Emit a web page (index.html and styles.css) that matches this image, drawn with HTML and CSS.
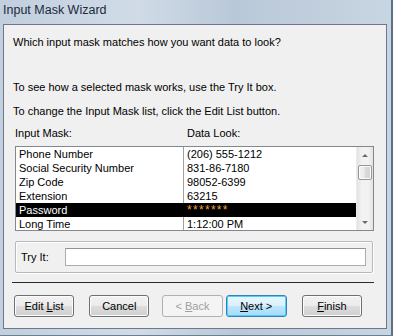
FILE: index.html
```html
<!DOCTYPE html>
<html lang="en">
<head>
  <meta charset="UTF-8" />
  <title>Input Mask Wizard</title>
  <link rel="stylesheet" href="styles.css">
</head>
<body>
<div class="window">
  <div class="titlebar">Input Mask Wizard</div>
  <div class="client">
    <p class="prompt">Which input mask matches how you want data to look?</p>
    <p class="hint first">To see how a selected mask works, use the Try It box.</p>
    <p class="hint">To change the Input Mask list, click the Edit List button.</p>
    <div class="headers">
      <span class="col-mask">Input Mask:</span>
      <span class="col-look">Data Look:</span>
    </div>
    <div class="listbox">
      <div class="rows">
        <div class="row"><span class="col-mask">Phone Number</span><span class="col-look">(206) 555-1212</span></div>
        <div class="row"><span class="col-mask">Social Security Number</span><span class="col-look">831-86-7180</span></div>
        <div class="row"><span class="col-mask">Zip Code</span><span class="col-look">98052-6399</span></div>
        <div class="row"><span class="col-mask">Extension</span><span class="col-look">63215</span></div>
        <div class="row selected"><span class="col-mask">Password</span><span class="col-look stars">*******</span></div>
        <div class="row"><span class="col-mask">Long Time</span><span class="col-look">1:12:00 PM</span></div>
      </div>
      <div class="scrollbar">
        <div class="arrow up"></div>
        <div class="track"><div class="thumb"></div></div>
        <div class="arrow down"></div>
      </div>
    </div>
    <div class="tryit">
      <label for="try">Try It:</label>
      <input type="text" id="try" />
    </div>
    <div class="separator"></div>
    <div class="buttons">
      <button>Edit <u>L</u>ist</button>
      <button class="gap-sm">Cancel</button>
      <button class="disabled">&lt; <u>B</u>ack</button>
      <button class="focused"><u>N</u>ext &gt;</button>
      <button class="gap-sm"><u>F</u>inish</button>
    </div>
  </div>
</div>
</body>
</html>
```

FILE: styles.css
```css
:root {
  --face: #f0f0f0;
  --text: #000000;
}
body {
  margin: 0;
  width: 393px;
  height: 336px;
  overflow: hidden;
  font-family: 'Liberation Sans', Arial, sans-serif;
  font-size: 11px;
  color: var(--text);
  background: #dbe5ef;
}
.window {
  width: 393px;
  height: 336px;
  box-sizing: border-box;
  background: linear-gradient(90deg, #c1cfde 0%, #d0dbe7 35%, #b9c8d8 60%, #c8d5e2 100%);
  border-right: 2px solid #5f6f82;
  border-bottom: 1px solid #6f7f90;
  padding: 0 4px 5px 3px;
}
.titlebar {
  height: 24px;
  line-height: 20px;
  font-size: 12.5px;
  color: #1c2a3c;
}
.client {
  height: 305px;
  box-sizing: border-box;
  background: var(--face);
  border: 1px solid #6c7888;
  padding: 0 11px 0 8px;
}
p {
  margin: 0;
  height: 14px;
  line-height: 14px;
  white-space: nowrap;
}
.prompt {
  margin-top: 10px;
  padding-left: 1px;
}
.hint {
  margin-top: 10px;
  padding-left: 1px;
}
.hint.first {
  margin-top: 31px;
}
.headers {
  display: flex;
  margin-top: 8px;
  height: 14px;
  line-height: 14px;
  padding-left: 3px;
}
.col-mask {
  width: 169px;
  flex: none;
  box-sizing: border-box;
}
.col-look {
  flex: 1;
  padding-left: 3px;
}
.listbox {
  display: flex;
  margin-top: 6px;
  margin-left: 3px;
  width: 359px;
  height: 85px;
  box-sizing: border-box;
  border: 1px solid #828790;
  background: #ffffff;
}
.rows {
  flex: 1;
  background: linear-gradient(90deg, transparent 167px, #a0a0a0 167px, #a0a0a0 168px, transparent 168px);
}
.row {
  display: flex;
  height: 14px;
  line-height: 14px;
  white-space: nowrap;
}
.row .col-mask {
  padding-left: 3px;
  width: 168px;
}
.row .col-look {
  padding-left: 3px;
}
.row.selected {
  background: #000000;
  color: #ffffff;
}
.stars {
  color: #e8a33c;
  font-size: 12px;
  letter-spacing: 1.3px;
}
.scrollbar {
  width: 16px;
  flex: none;
  display: flex;
  flex-direction: column;
  background: linear-gradient(90deg, #e3e3e3, #f2f2f2 30%, #f2f2f2 70%, #e3e3e3);
  border-left: 1px solid #ececec;
}
.arrow {
  height: 17px;
  flex: none;
  position: relative;
}
.arrow::after {
  content: "";
  position: absolute;
  left: 5px;
  width: 0;
  height: 0;
  border-left: 3px solid transparent;
  border-right: 3px solid transparent;
}
.arrow.up::after {
  top: 7px;
  border-bottom: 3px solid #6a6a6a;
}
.arrow.down::after {
  bottom: 6px;
  border-top: 3px solid #6a6a6a;
}
.track {
  flex: 1;
  padding: 1px 1px 0 1px;
}
.thumb {
  height: 15px;
  box-sizing: border-box;
  border: 1px solid #979797;
  border-radius: 2px;
  background: linear-gradient(90deg, #f3f3f3, #e8e8e8 50%, #d9d9d9 51%, #d6d6d6);
  box-shadow: inset 0 0 0 1px #fbfbfb;
}
.tryit {
  display: flex;
  align-items: center;
  margin-top: 10px;
  margin-left: 3px;
  width: 358px;
  height: 32px;
  box-sizing: border-box;
  border: 1px solid #b5b9bd;
  border-radius: 2px;
  box-shadow: inset 1px 1px 0 #ffffff, 1px 1px 0 #ffffff;
  padding: 0 6px 0 5px;
}
.tryit label {
  width: 44px;
  flex: none;
}
.tryit input {
  flex: 1;
  height: 18px;
  box-sizing: border-box;
  border: 1px solid #abadb3;
  border-top-color: #8e9299;
  background: #ffffff;
  margin: 0;
  padding: 0 2px;
  font: inherit;
}
.separator {
  margin-top: 9px;
  height: 0;
  border-top: 1px solid #2b2b2b;
  width: 362px;
}
.buttons {
  display: flex;
  margin-top: 12px;
  padding-left: 2px;
}
button {
  width: 63px;
  height: 22px;
  margin: 0 15px 0 0;
  padding: 0;
  font: inherit;
  color: #000000;
  border: 1px solid #707070;
  border-radius: 3px;
  background: linear-gradient(#f2f2f2 0%, #ebebeb 50%, #dddddd 51%, #cfcfcf 100%);
  box-shadow: inset 0 0 0 1px #fcfcfc;
}
button.gap-sm {
  margin-right: 13px;
}
button.disabled {
  color: #a0a0a0;
  border-color: #adb2b5;
  background: #f4f4f4;
  box-shadow: none;
  margin-right: 3px;
}
button.focused {
  width: 64px;
  border-color: #3c7fb1;
  background: linear-gradient(#eaf6fd 0%, #d9f0fc 50%, #bee6fd 51%, #a7d9f5 100%);
  box-shadow: inset 0 0 0 1px #48d3ff;
}
```
